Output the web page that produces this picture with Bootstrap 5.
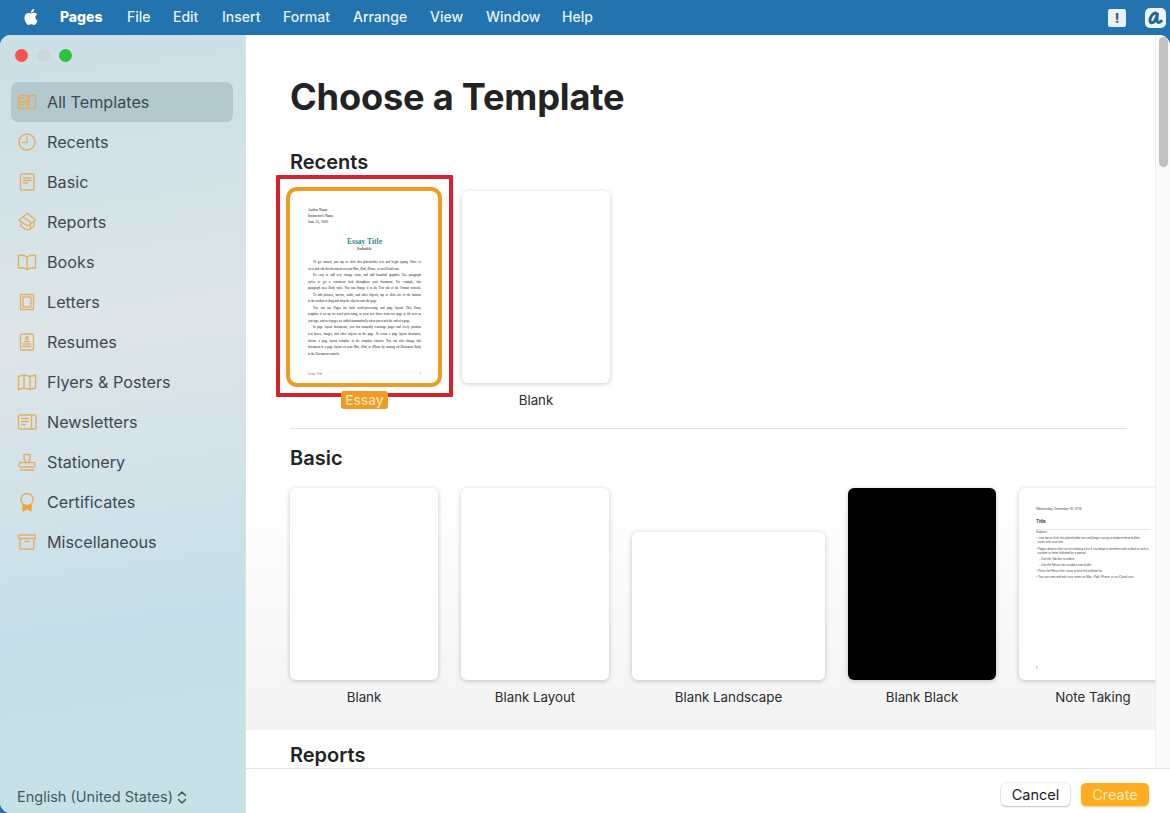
<!DOCTYPE html>
<html lang="en">
<head>
    <meta charset="UTF-8">
    <meta name="viewport" content="width=device-width, initial-scale=1.0">
    <title>Pages - Choose a Template</title>
    <link href="https://cdn.jsdelivr.net/npm/bootstrap@5.3.2/dist/css/bootstrap.min.css" rel="stylesheet">
    <style>
        html, body { height: 813px; overflow: hidden; }
        body { background: #2273ae; font-family: Inter, "Noto Sans", sans-serif; color: #222; }

        /* menu bar */
        .menu-bar { height: 35px; padding: 0; color: #e9f2f8; font-size: 14px; font-weight: 500; }
        .menu-bar span { position: relative; top: -1px; }
        .menu-apple { width: 16px; height: 18px; margin: 0 0 2px 23px; fill: #fff; }
        .menu-app { margin-left: 21px; font-weight: 800; width: 67px; color: #fff; }
        .menu-item-file { width: 46px; }
        .menu-item-edit { width: 49px; }
        .menu-item-insert { width: 61px; }
        .menu-item-format { width: 70px; }
        .menu-item-arrange { width: 77px; }
        .menu-item-view { width: 56px; }
        .menu-item-window { width: 76px; }
        .tray-alert { width: 18px; height: 18px; border-radius: 2px; background: #e9f1f8; color: #3b5a78; font-size: 13px; font-weight: 800; line-height: 18px; text-align: center; margin-right: 19px; }
        .tray-app { width: 21px; height: 20px; border-radius: 5px; background: #eef5fa; margin-right: 4px; }

        /* window */
        .app-window { height: 778px; border-radius: 11px 11px 0 11px; overflow: hidden; background: #fff; }
        .side-pane { width: 246px; flex: none; background: linear-gradient(172deg, #cbdfe6 0%, #d2e2e7 18%, #dde5e8 38%, #d2e2e9 58%, #c5dfe8 75%, #c7e2e6 100%); border-right: 1px solid #d5e2e6; color: #3d4a52; }
        .traffic-row { padding: 14px 0 0 15px; height: 47px; gap: 9px; }
        .traffic-dot { width: 13px; height: 13px; border-radius: 50%; }
        .dot-red { background: #f4534e; }
        .dot-grey { background: #ccd6db; }
        .dot-green { background: #2cc13f; }
        .side-nav { padding: 0 12px 0 11px; }
        .side-nav .nav-link { height: 40px; padding: 0 0 0 6px; gap: 10px; color: #3d4a52; font-size: 16.2px; border-radius: 7px; }
        .side-nav .nav-link.active { background: #b3c9ce; color: #3d4a52; }
        .side-icon { width: 20px; height: 20px; flex: none; fill: none; stroke: #dfb068; stroke-width: 1.4; stroke-linejoin: round; stroke-linecap: round; }
        .lang-picker { margin-top: auto; padding: 0 0 7px 17px; font-size: 14.5px; color: #47585f; line-height: 18px; gap: 4px; }
        .lang-chevrons { width: 10px; height: 15px; fill: none; stroke: #47585f; stroke-width: 1.5; stroke-linecap: round; stroke-linejoin: round; }

        /* template chooser */
        .main-pane { min-width: 0; }
        .scroll-pane { min-height: 0; }
        .scroll-body { width: 909px; flex: none; padding-top: 39px; overflow: hidden; }
        .scroll-track { width: 15px; flex: none; background: #fafafa; border-left: 1px solid #eeeeee; }
        .scroll-thumb { position: absolute; top: 2px; right: 2px; width: 9px; height: 130px; border-radius: 5px; background: #c1c1c1; }
        .chooser-title { font-size: 36.2px; line-height: 46px; font-weight: 700; margin: 0 0 30px 44px; color: #232323; letter-spacing: -.2px; }
        .group-title { font-size: 20px; line-height: 24px; font-weight: 600; margin: 0 0 0 44px; color: #232323; }
        .thumb-row { gap: 23px; margin: 17px 0 0 44px; width: 1000px; }
        .thumb-row-recents { gap: 24px; }
        .thumb-cell { width: 148px; flex: none; position: relative; }
        .thumb-wide { width: 193px; }
        .thumb-page { height: 192px; background: #fff; border-radius: 6px; box-shadow: 0 1px 5px rgba(0,0,0,.22); overflow: hidden; position: relative; }
        .thumb-land { height: 148px; }
        .thumb-black { background: #000; }
        .thumb-caption { margin-top: 8px; font-size: 13.3px; line-height: 18px; text-align: center; color: #2b2b2b; }
        .group-rule { height: 1px; background: #e2e2e2; margin: 19px 0 0 44px; width: 837px; }
        .group-band { height: 301px; padding-top: 17px; background: linear-gradient(#fff 18%, #f3f3f4 100%); }
        .group-band .thumb-row { margin-top: 18px; }
        .next-title { margin-top: 13px; }

        .thumb-essay { box-shadow: 0 0 0 4px #ee9c24; border-radius: 7px; }
        .pick-frame { position: absolute; top: -16px; left: -14px; width: 177px; height: 222px; border: 4px solid #d2232f; border-radius: 1px; pointer-events: none; }
        .pick-badge { position: absolute; top: 200px; left: 51px; width: 47px; height: 18px; border-radius: 3px; background: #ef9a22; color: #fbdcae; font-size: 13.5px; font-weight: 600; line-height: 19px; text-align: center; }

        .essay-doc { padding: 16px 0 0 18px; font-family: "Liberation Serif", serif; font-size: 3.05px; color: #111; white-space: nowrap; }
        .essay-head { line-height: 6px; font-size: 3.6px; }
        .essay-heading { margin-top: 12px; text-align: center; width: 113px; font-size: 7.5px; line-height: 9px; font-weight: 700; color: #2e8b84; }
        .essay-sub { text-align: center; width: 113px; font-size: 5px; line-height: 6px; margin-bottom: 7px; }
        .essay-line { line-height: 6.55px; width: 113px; text-align-last: justify; }
        .essay-line.indent { padding-left: 5px; }
        .essay-line.short { text-align-last: left; }
        .essay-foot { position: absolute; left: 18px; width: 113px; top: 181px; font-size: 2.8px; color: #777; }

        .note-doc { padding: 19px 0 0 17px; font-family: Inter, sans-serif; font-size: 2.75px; color: #444; white-space: nowrap; }
        .note-date { line-height: 5px; font-size: 3px; }
        .note-title { width: 114px; margin-top: 6px; font-size: 4.5px; font-weight: 600; line-height: 7px; color: #222; padding-bottom: 4px; border-bottom: 1px solid #e8e8e8; }
        .note-line { line-height: 4.2px; }
        .note-line.first { margin-top: 1px; }
        .note-line.gap-wide { margin-top: 2.5px; }
        .note-line.gap-above { margin-top: 1.8px; }
        .note-line.sub { padding-left: 3px; margin-top: 1.8px; }
        .note-page { position: absolute; left: 17px; top: 178px; font-size: 3px; }

        /* footer */
        .action-bar { height: 45px; flex: none; border-top: 1px solid #e4e4e4; padding: 6px 21px 0 0; gap: 11px; background: #fff; }
        .action-btn { height: 23px; width: 69px; padding: 0; font-size: 14.5px; line-height: 23px; border: 0; border-radius: 5px; }
        .action-cancel { background: #fff; color: #222; box-shadow: 0 0 0 .5px rgba(0,0,0,.12), 0 1px 2px rgba(0,0,0,.2); }
        .action-create { width: 68px; background: #fdad1f; color: #fde8b8; box-shadow: 0 1px 2px rgba(240,160,30,.5); }
    </style>
</head>
<body>
    <nav class="menu-bar d-flex align-items-center">
        <svg class="menu-apple" viewBox="0 0 24 24"><path d="M12.152 6.896c-.948 0-2.415-1.078-3.96-1.04-2.04.027-3.91 1.183-4.961 3.014-2.117 3.675-.546 9.103 1.519 12.09 1.013 1.454 2.208 3.09 3.792 3.039 1.52-.065 2.09-.987 3.935-.987 1.831 0 2.35.987 3.96.948 1.637-.026 2.676-1.48 3.676-2.948 1.156-1.688 1.636-3.325 1.662-3.415-.039-.013-3.182-1.221-3.22-4.857-.026-3.04 2.48-4.494 2.597-4.559-1.429-2.09-3.623-2.324-4.39-2.376-2-.156-3.675 1.09-4.61 1.09zM15.53 3.83c.843-1.012 1.4-2.427 1.245-3.83-1.207.052-2.662.805-3.532 1.818-.78.896-1.454 2.338-1.273 3.714 1.338.104 2.715-.688 3.559-1.701"/></svg>
        <span class="menu-app">Pages</span>
        <span class="menu-item-file">File</span>
        <span class="menu-item-edit">Edit</span>
        <span class="menu-item-insert">Insert</span>
        <span class="menu-item-format">Format</span>
        <span class="menu-item-arrange">Arrange</span>
        <span class="menu-item-view">View</span>
        <span class="menu-item-window">Window</span>
        <span>Help</span>
        <div class="ms-auto tray-alert">!</div>
        <svg class="tray-app" viewBox="0 0 21 20"><path d="M10.500 5C7.500 5.500 5 9 5 12.500c0 2.500 2.500 3 4.500 .8 1.500-1.800 2.200-4.500 3-7.300-.8 3-1 5.500-.2 7.500.8 1.500 2.500 1.200 4-.5" fill="none" stroke="#2b6699" stroke-width="3" stroke-linecap="round" stroke-linejoin="round"/></svg>
    </nav>

    <div class="app-window d-flex">
        <aside class="side-pane d-flex flex-column">
            <div class="traffic-row d-flex">
                <div class="traffic-dot dot-red"></div>
                <div class="traffic-dot dot-grey"></div>
                <div class="traffic-dot dot-green"></div>
            </div>
            <div class="nav flex-column side-nav">
                <a class="nav-link active d-flex align-items-center" href="#">
                    <svg class="side-icon" viewBox="0 0 20 20"><rect x="1.500" y="3.500" width="9" height="5.500" rx=".8"/><rect x="1.500" y="10.500" width="9" height="6" rx=".8"/><rect x="12" y="3.500" width="6.500" height="13" rx=".8"/><path d="M3.500 6h4M3.500 13h4"/></svg>
                    All Templates
                </a>
                <a class="nav-link d-flex align-items-center" href="#">
                    <svg class="side-icon" viewBox="0 0 20 20"><circle cx="10" cy="10" r="8"/><path d="M10 4.500V10.500H5.500"/></svg>
                    Recents
                </a>
                <a class="nav-link d-flex align-items-center" href="#">
                    <svg class="side-icon" viewBox="0 0 20 20"><rect x="3.500" y="2" width="13.500" height="16" rx="1.500"/><path d="M6.500 6h7.500M6.500 8.500h7.500M6.500 11h4"/></svg>
                    Basic
                </a>
                <a class="nav-link d-flex align-items-center" href="#">
                    <svg class="side-icon" viewBox="0 0 20 20"><path d="M10.500 1.500L18.500 8 10.500 14 2 8z"/><path d="M4 10.500v4c2 .8 3.500 1.200 4.500 3h4c1-1.800 2.500-2.200 4.500-3v-4"/><path d="M6.500 5.500l7 4.500v7"/></svg>
                    Reports
                </a>
                <a class="nav-link d-flex align-items-center" href="#">
                    <svg class="side-icon" viewBox="0 0 20 20"><path d="M10 5C8 3.500 4.500 3 1.500 3.500v12.500c3-.5 6.500 0 8.500 1.500 2-1.500 5.500-2 8.500-1.500V3.500C15.500 3 12 3.500 10 5zM10 5v12.500"/></svg>
                    Books
                </a>
                <a class="nav-link d-flex align-items-center" href="#">
                    <svg class="side-icon" viewBox="0 0 20 20"><path d="M3.500 2.500h13v15h-13z" stroke-dasharray="1.500 .9" stroke-width="1.500"/><rect x="6" y="5" width="8" height="10" rx=".5"/></svg>
                    Letters
                </a>
                <a class="nav-link d-flex align-items-center" href="#">
                    <svg class="side-icon" viewBox="0 0 20 20"><rect x="3.500" y="2" width="13" height="16" rx="1.500"/><circle cx="10" cy="6" r="1.300"/><path d="M7.500 9.500h5M6 12h8M6 14.500h8"/></svg>
                    Resumes
                </a>
                <a class="nav-link d-flex align-items-center" href="#">
                    <svg class="side-icon" viewBox="0 0 20 20"><path d="M1.500 4.500L7 3l6 1.500L18.500 3v13L13 17.500 7 16l-5.500 1.500zM7 3v13M13 4.500v13"/></svg>
                    Flyers &amp; Posters
                </a>
                <a class="nav-link d-flex align-items-center" href="#">
                    <svg class="side-icon" viewBox="0 0 20 20"><rect x="1.500" y="3" width="17.500" height="14" rx="1.500"/><path d="M14.500 3v14M4.500 6.500h7M4.500 9.500h7M4.500 12.500h4"/></svg>
                    Newsletters
                </a>
                <a class="nav-link d-flex align-items-center" href="#">
                    <svg class="side-icon" viewBox="0 0 20 20"><path d="M7 2.500h6v3c0 2-1 2.500-1 5H8c0-2.500-1-3-1-5z"/><rect x="2" y="10.500" width="16" height="4.500" rx="1.500"/><path d="M3 18h14"/></svg>
                    Stationery
                </a>
                <a class="nav-link d-flex align-items-center" href="#">
                    <svg class="side-icon" viewBox="0 0 20 20"><circle cx="10" cy="7.500" r="6"/><path d="M6 12.500V19l4-2.500 4 2.500v-6.500c-2.500 1.400-5.500 1.400-8 0z" fill="#eea437" stroke="#eea437"/></svg>
                    Certificates
                </a>
                <a class="nav-link d-flex align-items-center" href="#">
                    <svg class="side-icon" viewBox="0 0 20 20"><rect x="1.500" y="3" width="17" height="3.500" rx=".8"/><path d="M3 6.500V16c0 .8.500 1.200 1.200 1.200h11.600c.7 0 1.200-.4 1.200-1.200V6.500M8 9.500h4"/></svg>
                    Miscellaneous
                </a>
            </div>
            <div class="lang-picker d-flex align-items-center">
                English (United States)
                <svg class="lang-chevrons" viewBox="0 0 10 15"><path d="M1.500 5.500L5 2l3.500 3.500M1.500 9.500L5 13l3.500-3.500"/></svg>
            </div>
        </aside>

        <main class="main-pane flex-grow-1 d-flex flex-column">
            <div class="scroll-pane flex-grow-1 d-flex overflow-hidden">
                <div class="scroll-body">
                    <h1 class="chooser-title">Choose a Template</h1>

                    <h2 class="group-title">Recents</h2>
                    <div class="thumb-row thumb-row-recents d-flex align-items-end">
                        <div class="thumb-cell">
                            <div class="thumb-page thumb-essay">
                                <div class="essay-doc">
                                    <div class="essay-head">Author Name</div>
                                    <div class="essay-head">Instructor's Name</div>
                                    <div class="essay-head">June 25, 2020</div>
                                    <div class="essay-heading">Essay Title</div>
                                    <div class="essay-sub">Subtitle</div>
                                    <div class="essay-line indent">To get started, just tap or click this placeholder text and begin typing. Place to</div>
                                    <div class="essay-line short">view and edit this document on your Mac, iPad, iPhone, or on iCloud.com.</div>
                                    <div class="essay-line indent">It's easy to add text, change fonts, and add beautiful graphics. Use paragraph</div>
                                    <div class="essay-line">styles to get a consistent look throughout your document. For example, this</div>
                                    <div class="essay-line">paragraph uses Body style. You can change it in the Text tab of the Format controls.</div>
                                    <div class="essay-line indent">To add pictures, movies, audio, and other objects, tap or click one of the buttons</div>
                                    <div class="essay-line short">in the toolbar or drag and drop the objects onto the page.</div>
                                    <div class="essay-line indent">You can use Pages for both word-processing and page layout. This Essay</div>
                                    <div class="essay-line">template is set up for word processing, so your text flows from one page to the next as</div>
                                    <div class="essay-line short">you type, and new pages are added automatically when you reach the end of a page.</div>
                                    <div class="essay-line indent">In page layout documents, you can manually rearrange pages and freely position</div>
                                    <div class="essay-line">text boxes, images, and other objects on the page. To create a page layout document,</div>
                                    <div class="essay-line">choose a page layout template in the template chooser. You can also change this</div>
                                    <div class="essay-line">document to a page layout on your Mac, iPad, or iPhone by turning off Document Body</div>
                                    <div class="essay-line short">in the Document controls.</div>
                                </div>
                                <div class="essay-foot d-flex justify-content-between"><span>Essay Title</span><span>1</span></div>
                            </div>
                            <div class="pick-frame"></div>
                            <div class="pick-badge">Essay</div>
                            <div class="thumb-caption">&nbsp;</div>
                        </div>
                        <div class="thumb-cell">
                            <div class="thumb-page"></div>
                            <div class="thumb-caption">Blank</div>
                        </div>
                    </div>
                    <div class="group-rule"></div>

                    <section class="group-band">
                        <h2 class="group-title">Basic</h2>
                        <div class="thumb-row d-flex align-items-end">
                            <div class="thumb-cell">
                                <div class="thumb-page"></div>
                                <div class="thumb-caption">Blank</div>
                            </div>
                            <div class="thumb-cell">
                                <div class="thumb-page"></div>
                                <div class="thumb-caption">Blank Layout</div>
                            </div>
                            <div class="thumb-cell thumb-wide">
                                <div class="thumb-page thumb-land"></div>
                                <div class="thumb-caption">Blank Landscape</div>
                            </div>
                            <div class="thumb-cell">
                                <div class="thumb-page thumb-black"></div>
                                <div class="thumb-caption">Blank Black</div>
                            </div>
                            <div class="thumb-cell">
                                <div class="thumb-page">
                                    <div class="note-doc">
                                        <div class="note-date">Wednesday, December 19, 2018</div>
                                        <div class="note-title">Title</div>
                                        <div class="note-date">Subject:</div>
                                        <div class="note-line first">&bull; Just tap or click this placeholder text and begin typing to replace these bullets</div>
                                        <div class="note-line">&nbsp;&nbsp;notes with your text.</div>
                                        <div class="note-line gap-wide">&bull; Pages detects that you're creating a list if you begin a sentence with a dash or with a</div>
                                        <div class="note-line">&nbsp;&nbsp;number or letter followed by a period.</div>
                                        <div class="note-line sub">&ndash; Use the Tab key to indent.</div>
                                        <div class="note-line sub">&ndash; Use the Return key to add a new bullet.</div>
                                        <div class="note-line gap-above">&bull; Press the Return key twice to end the bulleted list.</div>
                                        <div class="note-line gap-above">&bull; You can view and edit your notes on Mac, iPad, iPhone, or on iCloud.com.</div>
                                    </div>
                                    <div class="note-page">1</div>
                                </div>
                                <div class="thumb-caption">Note Taking</div>
                            </div>
                        </div>
                    </section>

                    <h2 class="group-title next-title">Reports</h2>
                </div>
                <div class="scroll-track position-relative">
                    <div class="scroll-thumb"></div>
                </div>
            </div>
            <div class="action-bar d-flex justify-content-end align-items-center">
                <button type="button" class="btn action-btn action-cancel">Cancel</button>
                <button type="button" class="btn action-btn action-create">Create</button>
            </div>
        </main>
    </div>

    <script src="https://cdn.jsdelivr.net/npm/bootstrap@5.3.2/dist/js/bootstrap.bundle.min.js"></script>
</body>
</html>
